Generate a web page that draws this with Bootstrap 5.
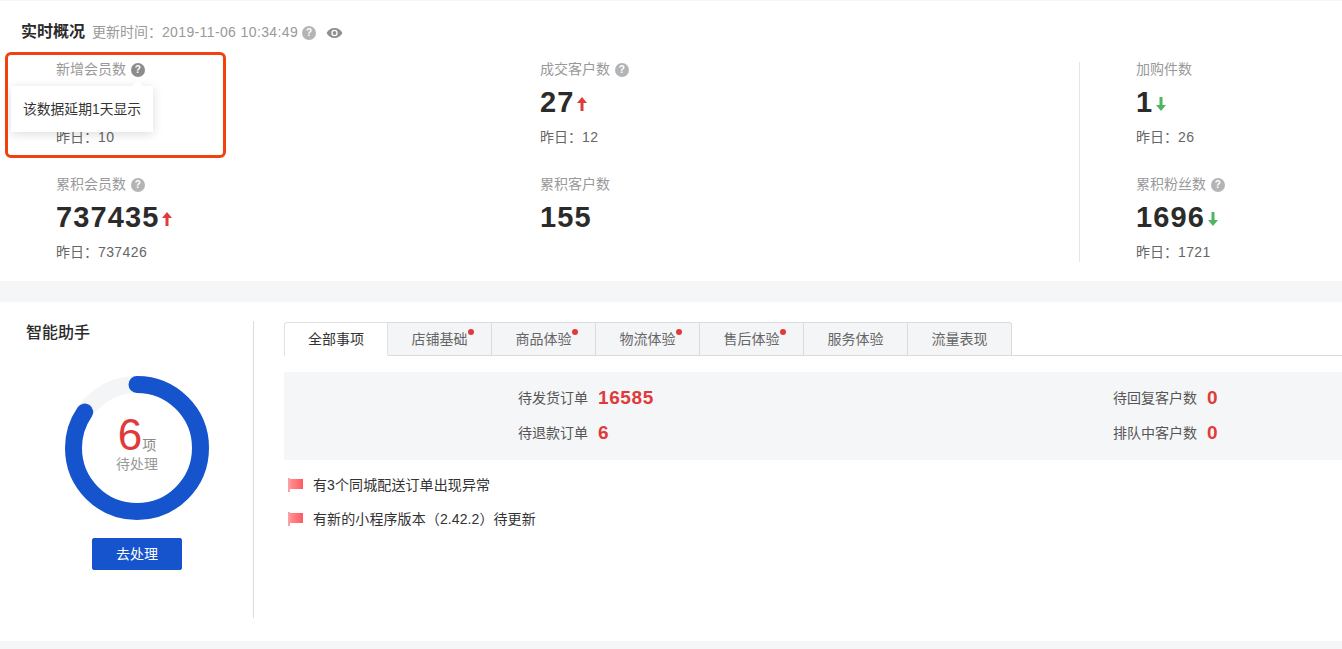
<!DOCTYPE html>
<html lang="zh-CN">
<head>
    <meta charset="UTF-8">
    <title>实时概况</title>
    <meta name="viewport" content="width=device-width, initial-scale=1">
    <link href="https://cdn.jsdelivr.net/npm/bootstrap@5.3.0/dist/css/bootstrap.min.css" rel="stylesheet">
    <style>
        body {
            background: #f5f6f8;
            font-family: "Liberation Sans", "Noto Sans CJK SC", sans-serif;
            font-size: 14px;
            color: #333;
            overflow: hidden;
        }
        .panel { background: #fff; }
        .overview { margin-top: 1px; padding: 20px 0 19px; height: 280px; position: relative; }
        .overview-head { height: 22px; padding-left: 21px; line-height: 22px; }
        .overview-title { font-size: 16px; font-weight: 600; color: #2b2b2b; margin-right: 3px; }
        .update-time { color: #999; }
        .update-time b { font-weight: 400; letter-spacing: .38px; }
        .qmark {
            display: inline-block; width: 14px; height: 14px; border-radius: 50%;
            background: #b4b4b4; color: #fff; font-size: 10px; font-weight: 700;
            line-height: 14px; text-align: center; vertical-align: 1px;
        }
        .qmark-hover { background: #8c8c8c; }
        .eye { margin-left: 6px; vertical-align: -2px; }
        .stats { margin-top: 16px; }
        .stat-col-a { margin-left: 56px; width: 484px; }
        .stat-col-b { width: 539px; }
        .stat-col-c { margin-left: 56px; }
        .stat-rule { width: 1px; height: 200px; margin-top: 3px; background: #e5e5e5; }
        .stat-item { height: 115px; }
        .stat-label { height: 20px; line-height: 20px; color: #999; }
        .stat-label .qmark { margin-left: 1px; }
        .stat-value {
            height: 36px; margin-top: 5px; line-height: 36px; font-size: 29px; font-weight: 700;
            color: #2b2b2b; letter-spacing: 1.1px;
        }
        .stat-value svg { vertical-align: 0; margin-left: 2px; }
        .stat-prev { margin-top: 7px; height: 20px; line-height: 20px; color: #666; }
        .stat-prev b { font-weight: 400; letter-spacing: .4px; }
        .callout {
            position: absolute; left: 5px; top: 51px; width: 221px; height: 106px;
            border: 3px solid #f2400f; border-radius: 6px; pointer-events: none;
        }
        .hint {
            position: absolute; left: 11px; top: 85px; width: 142px; height: 46px;
            background: #fff; box-shadow: 0 2px 10px rgba(0, 0, 0, .14);
            line-height: 47px; text-align: center; color: #333; font-size: 13.8px;
        }
        .hint::before {
            content: ""; position: absolute; left: 122px; top: -4px; width: 9px; height: 9px;
            background: #fff; transform: rotate(45deg);
        }
        .assistant { margin-top: 21px; height: 339px; padding: 19px 0 23px; }
        .side { width: 254px; border-right: 1px solid #dcdcdc; flex: none; }
        .side-title { margin: 1px 0 0 26px; height: 22px; line-height: 22px; font-size: 16px; font-weight: 500; color: #2b2b2b; }
        .side-body { width: 144px; margin: 32px 0 0 65px; }
        .ring-wrap { position: relative; width: 144px; height: 144px; }
        .ring-text {
            position: absolute; inset: 0; display: flex; flex-direction: column; align-items: center;
            padding-top: 37px; color: #999;
        }
        .ring-num { font-size: 44px; line-height: 44px; color: #e03a3a; }
        .ring-unit { font-size: 14px; color: #888; }
        .ring-sub { line-height: 20px; margin-top: -3px; }
        .go-btn {
            width: 90px; height: 32px; margin-top: 18px; padding: 0; border-radius: 2px;
            background: #1554cc; border-color: #1554cc; color: #fff; font-size: 14px; line-height: 30px;
        }
        .main { padding: 1px 0 0 30px; flex: 1; min-width: 0; }
        .tabs-bar { border-bottom: 1px solid #d9dbde; }
        .tabs-bar .nav-link {
            position: relative; width: 104px; height: 34px; padding: 0; margin: 0 0 -1px 0;
            border: 1px solid #d9dbde; border-left-width: 0; border-radius: 0;
            background: #f4f5f7; color: #666; font-size: 14px; line-height: 33px; text-align: center;
        }
        .tabs-bar .nav-item:first-child .nav-link { border-left-width: 1px; border-top-left-radius: 3px; }
        .tabs-bar .nav-item:last-child .nav-link { border-top-right-radius: 3px; }
        .tabs-bar .nav-link.active { background: #fff; color: #333; border-bottom-color: #fff; }
        .tab-dot {
            position: absolute; left: 80px; top: 6px; width: 6px; height: 6px;
            border-radius: 50%; background: #e03a3a;
        }
        .todo-box { margin-top: 16px; height: 88px; padding: 9px 0 0 234px; background: #f5f6f8; }
        .todo-col-a { width: 595px; }
        .todo-row { height: 35px; line-height: 35px; color: #555; }
        .todo-col-a .todo-name { width: 80px; }
        .todo-col-b .todo-name { width: 94px; }
        .todo-num { font-size: 19px; line-height: 33px; font-weight: 700; color: #e03a3a; letter-spacing: .6px; }
        .notices { margin-top: 8px; }
        .notice-row { height: 34px; line-height: 34px; padding-left: 4px; color: #333; letter-spacing: .1px; }
        .notice-row svg { margin-right: 10px; }
    </style>
</head>
<body>
    <!-- 实时概况 -->
    <section class="panel overview">
        <div class="overview-head">
            <span class="overview-title">实时概况</span>
            <span class="update-time">更新时间：<b>2019-11-06 10:34:49</b></span>
            <span class="qmark">?</span>
            <svg class="eye" width="17" height="12" viewBox="0 0 17 12"><path fill="#8f8f8f" fill-rule="evenodd" d="M8.5 1C4.9 1 1.9 3.1.6 6c1.3 2.9 4.3 5 7.9 5s6.6-2.1 7.9-5c-1.3-2.9-4.3-5-7.9-5zm0 8.2A3.2 3.2 0 1 1 8.500 2.800a3.200 3.200 0 0 1 0 6.400zm0-5.100a1.900 1.900 0 1 0 0 3.800 1.900 1.900 0 0 0 0-3.800z"/></svg>
        </div>
        <div class="stats d-flex">
            <div class="stat-col-a">
                <div class="stat-item">
                    <div class="stat-label">新增会员数 <span class="qmark qmark-hover">?</span></div>
                    <div class="stat-value"></div>
                    <div class="stat-prev">昨日：<b>10</b></div>
                </div>
                <div class="stat-item">
                    <div class="stat-label">累积会员数 <span class="qmark">?</span></div>
                    <div class="stat-value">737435<svg width="12" height="16" viewBox="0 0 12 16"><path fill="#e03a3a" d="M6 1l5 6H7.500v8h-3V7H1z"/></svg></div>
                    <div class="stat-prev">昨日：<b>737426</b></div>
                </div>
            </div>
            <div class="stat-col-b">
                <div class="stat-item">
                    <div class="stat-label">成交客户数 <span class="qmark">?</span></div>
                    <div class="stat-value">27<svg width="12" height="16" viewBox="0 0 12 16"><path fill="#e03a3a" d="M6 1l5 6H7.500v8h-3V7H1z"/></svg></div>
                    <div class="stat-prev">昨日：<b>12</b></div>
                </div>
                <div class="stat-item">
                    <div class="stat-label">累积客户数</div>
                    <div class="stat-value">155</div>
                </div>
            </div>
            <div class="stat-rule"></div>
            <div class="stat-col-c">
                <div class="stat-item">
                    <div class="stat-label">加购件数</div>
                    <div class="stat-value">1<svg width="12" height="16" viewBox="0 0 12 16"><path fill="#4fb565" d="M6 15l5-6H7.500V1h-3v8H1z"/></svg></div>
                    <div class="stat-prev">昨日：<b>26</b></div>
                </div>
                <div class="stat-item">
                    <div class="stat-label">累积粉丝数 <span class="qmark">?</span></div>
                    <div class="stat-value">1696<svg width="12" height="16" viewBox="0 0 12 16"><path fill="#4fb565" d="M6 15l5-6H7.500V1h-3v8H1z"/></svg></div>
                    <div class="stat-prev">昨日：<b>1721</b></div>
                </div>
            </div>
        </div>
        <div class="hint">该数据延期1天显示</div>
        <div class="callout"></div>
    </section>

    <!-- 智能助手 -->
    <section class="panel assistant d-flex">
        <div class="side">
            <div class="side-title">智能助手</div>
            <div class="side-body d-flex flex-column align-items-center">
                <div class="ring-wrap">
                    <svg width="144" height="144" viewBox="0 0 144 144">
                        <circle cx="72" cy="72" r="63.500" fill="none" stroke="#f4f5f7" stroke-width="17"/>
                        <circle cx="72" cy="72" r="63.500" fill="none" stroke="#1554cc" stroke-width="17" stroke-linecap="round" pathLength="100" stroke-dasharray="84.600 100" transform="rotate(-90 72 72)"/>
                    </svg>
                    <div class="ring-text">
                        <div><span class="ring-num">6</span><span class="ring-unit">项</span></div>
                        <div class="ring-sub">待处理</div>
                    </div>
                </div>
                <button type="button" class="btn go-btn">去处理</button>
            </div>
        </div>
        <div class="main">
            <ul class="nav nav-tabs tabs-bar">
                <li class="nav-item"><a class="nav-link active" href="#">全部事项</a></li>
                <li class="nav-item"><a class="nav-link" href="#">店铺基础<span class="tab-dot"></span></a></li>
                <li class="nav-item"><a class="nav-link" href="#">商品体验<span class="tab-dot"></span></a></li>
                <li class="nav-item"><a class="nav-link" href="#">物流体验<span class="tab-dot"></span></a></li>
                <li class="nav-item"><a class="nav-link" href="#">售后体验<span class="tab-dot"></span></a></li>
                <li class="nav-item"><a class="nav-link" href="#">服务体验</a></li>
                <li class="nav-item"><a class="nav-link" href="#">流量表现</a></li>
            </ul>
            <div class="todo-box d-flex">
                <div class="todo-col-a">
                    <div class="todo-row d-flex"><span class="todo-name">待发货订单</span><span class="todo-num">16585</span></div>
                    <div class="todo-row d-flex"><span class="todo-name">待退款订单</span><span class="todo-num">6</span></div>
                </div>
                <div class="todo-col-b">
                    <div class="todo-row d-flex"><span class="todo-name">待回复客户数</span><span class="todo-num">0</span></div>
                    <div class="todo-row d-flex"><span class="todo-name">排队中客户数</span><span class="todo-num">0</span></div>
                </div>
            </div>
            <div class="notices">
                <div class="notice-row d-flex align-items-center">
                    <svg width="15" height="14" viewBox="0 0 15 14"><defs><linearGradient id="flagFill" x1="0" y1="0" x2="1" y2="0"><stop offset="0" stop-color="#ff8f92"/><stop offset="1" stop-color="#ff5a60"/></linearGradient></defs><path fill="url(#flagFill)" d="M2 1h13v10H2z"/><path fill="#f9a0a4" d="M0 0h2v14H0z"/></svg>
                    <span>有3个同城配送订单出现异常</span>
                </div>
                <div class="notice-row d-flex align-items-center">
                    <svg width="15" height="14" viewBox="0 0 15 14"><path fill="url(#flagFill)" d="M2 1h13v10H2z"/><path fill="#f9a0a4" d="M0 0h2v14H0z"/></svg>
                    <span>有新的小程序版本（2.42.2）待更新</span>
                </div>
            </div>
        </div>
    </section>
</body>
</html>
